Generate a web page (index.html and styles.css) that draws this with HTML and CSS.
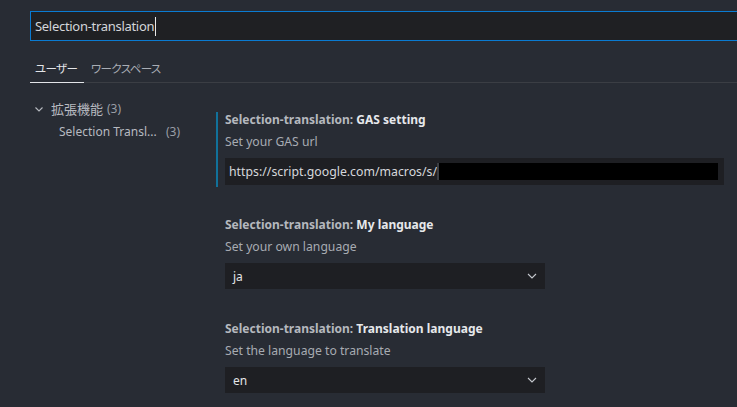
FILE: index.html
```html
<!DOCTYPE html>
<html lang="ja">
<head>
<meta charset="utf-8">
<title>Settings</title>
<link rel="stylesheet" href="styles.css">
</head>
<body>
<div class="page">
  <div class="search">
    <span class="search-text">Selection-translation</span><span class="caret"></span>
  </div>
  <div class="tabs">
    <div class="tab active">ユーザー</div>
    <div class="tab">ワークスペース</div>
  </div>
  <div class="main">
    <div class="tree">
      <div class="tree-row group">
        <svg class="chev" width="10" height="10" viewBox="0 0 10 10"><path d="M1.5 3.5 L5 7 L8.5 3.5" fill="none" stroke="#b7bac0" stroke-width="1.1"/></svg>
        <span class="tree-label">拡張機能</span><span class="count">(3)</span>
      </div>
      <div class="tree-row child">
        <span class="tree-label">Selection Transl...</span><span class="count">(3)</span>
      </div>
    </div>
    <div class="settings">
      <div class="item focused">
        <div class="title"><span class="cat">Selection-translation: </span><span class="key">GAS setting</span></div>
        <div class="desc">Set your GAS url</div>
        <div class="textbox"><span class="value">https://script.google.com/macros/s/</span><span class="redact"></span></div>
      </div>
      <div class="item">
        <div class="title"><span class="cat">Selection-translation: </span><span class="key">My language</span></div>
        <div class="desc">Set your own language</div>
        <div class="select"><span class="value">ja</span><svg class="sel-chev" width="10" height="10" viewBox="0 0 10 10"><path d="M1 3 L5 7 L9 3" fill="none" stroke="#c5c8ce" stroke-width="1.1"/></svg></div>
      </div>
      <div class="item">
        <div class="title"><span class="cat">Selection-translation: </span><span class="key">Translation language</span></div>
        <div class="desc">Set the language to translate</div>
        <div class="select"><span class="value">en</span><svg class="sel-chev" width="10" height="10" viewBox="0 0 10 10"><path d="M1 3 L5 7 L9 3" fill="none" stroke="#c5c8ce" stroke-width="1.1"/></svg></div>
      </div>
    </div>
  </div>
</div>
</body>
</html>
```
FILE: styles.css
```css
html, body {
  margin: 0;
  padding: 0;
  background: #282c34;
  overflow: hidden;
}
body {
  font-family: "Noto Sans", "Noto Sans CJK JP", sans-serif;
  font-size: 13px;
  color: #c8cbd0;
}
.page {
  width: 737px;
  height: 407px;
  padding: 11px 0 0 30px;
  box-sizing: border-box;
  overflow: hidden;
}
.search {
  width: 720px;
  height: 30px;
  box-sizing: border-box;
  border: 1px solid #0a7bd2;
  background: #1f2023;
  display: flex;
  align-items: center;
  padding-left: 4px;
}
.search-text {
  color: #d4d6da;
  font-size: 13px;
  line-height: 18px;
  letter-spacing: -0.3px;
}
.caret {
  display: inline-block;
  width: 1px;
  height: 19px;
  background: #e8e8e8;
  margin-left: 1px;
}
.tabs {
  display: flex;
  height: 42px;
  box-sizing: border-box;
  border-bottom: 1px solid #3b3e44;
}
.tab {
  font-family: "Noto Sans CJK JP", sans-serif;
  font-feature-settings: "palt";
  font-size: 11.5px;
  letter-spacing: -0.6px;
  color: #a9adb4;
  padding: 19px 5px 0 5px;
  line-height: 16px;
  box-sizing: border-box;
  height: 42px;
  margin-bottom: -1px;
}
.tab.active {
  color: #e3e5e8;
  border-bottom: 1px solid #e3e5e8;
  width: 54px;
  padding: 19px 0 0 5px;
  margin-right: 2px;
}
.main {
  display: flex;
}
.tree {
  width: 186px;
  padding-top: 14px;
}
.tree-row {
  display: flex;
  align-items: center;
  height: 23px;
  color: #b7bac0;
  font-size: 12px;
}
.tree-row.group {
  padding-left: 4px;
}
.chev {
  margin-right: 7px;
}
.tree-row.group .tree-label {
  font-family: "Noto Sans CJK JP", sans-serif;
  font-size: 13px;
  margin-right: 4px;
}
.tree-row.child {
  padding-left: 29px;
}
.tree-row.child .tree-label {
  width: 107px;
}
.count {
  color: #9a9ea6;
}
.settings {
  flex: 1;
  padding-top: 29px;
}
.item {
  border-left: 2px solid transparent;
  padding: 0 0 2px 7px;
  margin-bottom: 30px;
}
.item.focused {
  border-left-color: #11719a;
}
.title {
  font-weight: 700;
  line-height: 14px;
  padding-top: 1px;
  font-size: 12px;
}
.cat {
  color: #b5b8be;
}
.key {
  color: #e6e8eb;
}
.desc {
  margin-top: 6px;
  line-height: 18px;
  font-size: 12.2px;
  color: #a7abb2;
}
.textbox {
  margin-top: 7px;
  width: 499px;
  height: 27px;
  background: #1e1f23;
  display: flex;
  align-items: center;
  padding: 0 6px 0 4px;
  box-sizing: border-box;
}
.textbox .value {
  color: #d6d8dc;
  font-size: 12.3px;
}
.redact {
  flex: 1;
  height: 17px;
  background: #000;
  border-left: 2px solid #3a3d42;
}
.select {
  margin-top: 7px;
  width: 320px;
  height: 26px;
  background: #1e1f23;
  display: flex;
  align-items: center;
  justify-content: space-between;
  padding: 0 8px;
  box-sizing: border-box;
  color: #e3e5e8;
  font-size: 12px;
}
```
